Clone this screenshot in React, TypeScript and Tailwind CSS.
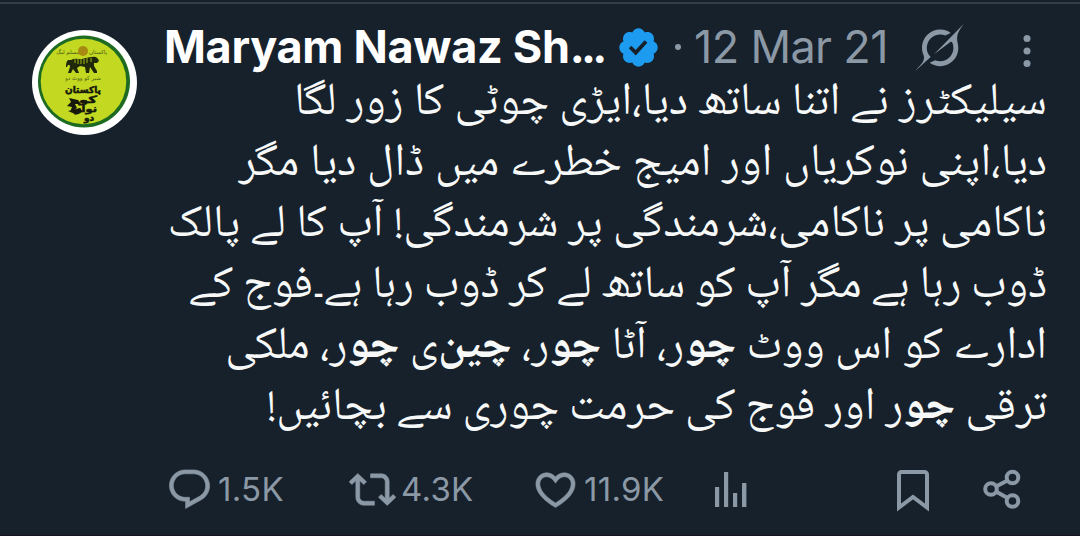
import type { ReactNode } from 'react';

const ICON = 'fill-[#8b98a5] shrink-0';

function Avatar() {
  return (
    <svg className="h-[105px] w-[105px] shrink-0" viewBox="0 0 105 105">
      <circle cx="52.5" cy="52.5" r="52.5" fill="#fff" />
      <circle cx="52" cy="51.5" r="46" fill="#1d6b22" />
      <circle cx="51.5" cy="51.5" r="42.8" fill="#c3d820" />
      <g fill="#4a5a14" fontFamily="DejaVu Sans, sans-serif" textAnchor="middle">
        <text x="66" y="24" fontSize="5.5">پاکستان</text>
        <text x="36" y="24" fontSize="5.5">مسلم لیگ</text>
        <text x="51" y="49.5" fontSize="5.5">شیر کو ووٹ دو</text>
      </g>
      <circle cx="51" cy="21" r="5" fill="#a88a12" />
      {/* tiger */}
      <path
        d="M39 30c3-2 7-1 11-1 4-1 6-2 10-2 4-1 6 1 7 4l-2 2-3 0 0 3 3 5v2h-3l-4-6-1 6h-3l-1-6-5-1-3 2 2 5h-3l-3-4-2 4h-3l2-6c0-3-2-3-3 0l-1 0c0-3 0-5 2-7z"
        fill="#20280a"
      />
      <path d="M43 29v4M46 29v5M49 29v5M52 29v5M55 28v5M59 28v4" stroke="#c3d820" strokeWidth=".8" />
      <g fill="#15180a" stroke="#15180a" strokeWidth=".5" fontFamily="DejaVu Sans, sans-serif" fontWeight="700" textAnchor="middle">
        <text x="51" y="63" fontSize="9">پاکستان</text>
        <text x="56" y="73" fontSize="10" textLength="18" lengthAdjust="spacingAndGlyphs">کو</text>
        <text x="54" y="82" fontSize="9" textLength="22" lengthAdjust="spacingAndGlyphs">نواز</text>
        <text x="57" y="91" fontSize="9">دو</text>
      </g>
      <path d="M37 68l9 2 3 4-6 0 2 4-7 4 2-5-5-1 4-4zM36 81l12-3 3 4-8 2z" fill="#15180a" />
    </svg>
  );
}

function Verified() {
  return (
    <svg className="h-[45px] w-[45px] shrink-0 fill-[#1d9bf0]" viewBox="0 0 24 24">
      <path d="M22.25 12c0-1.430-.88-2.670-2.190-3.340.46-1.390.2-2.900-.81-3.910s-2.520-1.270-3.910-.81c-.66-1.310-1.910-2.190-3.340-2.190s-2.670.88-3.330 2.190c-1.400-.46-2.910-.2-3.920.81s-1.260 2.520-.8 3.910c-1.310.67-2.200 1.910-2.200 3.340s.89 2.670 2.200 3.340c-.46 1.390-.21 2.900.8 3.910s2.520 1.260 3.910.81c.67 1.310 1.910 2.190 3.340 2.190s2.680-.88 3.340-2.190c1.390.45 2.900.2 3.910-.81s1.270-2.520.81-3.910c1.310-.67 2.190-1.910 2.190-3.340zm-11.710 4.200L6.800 12.460l1.410-1.420 2.260 2.260 4.800-5.230 1.470 1.360-6.200 6.770z" />
    </svg>
  );
}

function Line({ children, className = '' }: { children: ReactNode; className?: string }) {
  return (
    <div className={`flex h-[61px] items-center whitespace-pre ${className}`}>
      <span>{children}</span>
    </div>
  );
}

export default function App() {
  return (
    <main className="flex h-[536px] w-[1080px] flex-col overflow-hidden border-b border-[#12131f] bg-[#17212b] font-[Inter,sans-serif]">
      <div className="mt-[2px] h-[2px] w-full shrink-0 bg-[#323d46]" />

      <article className="flex pl-[32px]">
        <div className="pt-[26px]">
          <Avatar />
        </div>

        <div className="ml-[27px] w-[916px]">
          {/* HEADER */}
          <header className="flex h-[68px] items-center pt-[18px]">
            <span className="w-[452px] whitespace-nowrap text-[45px] leading-[54px] font-bold tracking-[-0.3px] text-white">
              Maryam Nawaz Sh<span className="tracking-[-3.8px]">...</span>
            </span>
            <Verified />
            <span className="ml-[14px] h-[6px] w-[6px] shrink-0 rounded-full bg-[#8b98a5]" />
            <span className="ml-[13px] w-[221px] whitespace-nowrap text-[45px] leading-[54px] tracking-[-0.65px] text-[#8b98a5]">12 Mar 21</span>
            <svg className={`h-[47px] w-[49px] ${ICON}`} viewBox="0 0 33 32">
              <path d="M12.745 20.540l10.970-8.190c.539-.4 1.307-.244 1.564.38 1.349 3.288.746 7.241-1.938 9.955-2.683 2.714-6.417 3.310-9.830 1.954l-3.728 1.745c5.347 3.697 11.840 2.782 15.898-1.324 3.219-3.255 4.216-7.692 3.284-11.693l.008.009c-1.351-5.878.332-8.227 3.782-13.031L33 0l-4.540 4.590v-.014L12.743 20.544m-2.263 1.987c-3.837-3.707-3.175-9.446.1-12.755 2.420-2.449 6.388-3.448 9.852-1.979l3.720-1.737c-.67-.49-1.530-1.017-2.515-1.387-4.455-1.854-9.789-.931-13.410 2.728-3.483 3.523-4.579 8.940-2.697 13.561 1.405 3.454-.899 5.898-3.220 8.364C1.490 30.200.666 31.074 0 32l10.478-9.466" />
            </svg>
            <svg className={`ml-[59px] h-[40px] w-[8px] ${ICON}`} viewBox="0 0 8 40">
              <circle cx="4" cy="11.5" r="3.5" />
              <circle cx="4" cy="24" r="3.5" />
              <circle cx="4" cy="36.5" r="3.5" />
            </svg>
          </header>

          {/* TWEET TEXT */}
          <div dir="rtl" lang="ur" className="pr-[33px] font-['Noto_Naskh_Arabic_UI','Noto_Naskh_Arabic','Noto_Sans_Arabic','Noto_Sans','DejaVu_Sans',sans-serif] text-[45.8px] text-[#f7f9f9]">
            <Line className="[word-spacing:0.1px]">سیلیکٹرز نے اتنا ساتھ دیا،ایڑی چوٹی کا زور لگا</Line>
            <Line className="[word-spacing:0.7px]">دیا،اپنی نوکریاں اور امیج خطرے میں ڈال دیا مگر</Line>
            <Line className="[word-spacing:0.2px]">ناکامی پر ناکامی،شرمندگی پر شرمندگی! آپ کا لے پالک</Line>
            <Line className="[word-spacing:-0.33px]">ڈوب رہا ہے مگر آپ کو ساتھ لے کر ڈوب رہا ہے۔فوج کے</Line>
            <Line className="[word-spacing:0.1px]">
              ادارے کو اس ووٹ <b>چو</b>ر، آٹا <b>چو</b>ر، <b>چین</b>&zwnj;ی <b>چو</b>ر، ملکی
            </Line>
            <Line className="[word-spacing:-0.1px]">
              ترقی <b>چو</b>ر اور فوج کی حرمت چوری سے بچائیں!
            </Line>
          </div>

          {/* ACTIONS */}
          <footer className="mt-[27px] flex h-[48px] items-center text-[33px] leading-[40px] tracking-[0.3px] text-[#8b98a5]">
            <div className="flex w-[183px] items-center pl-[2px]">
              <svg className={`h-[47px] w-[47px] stroke-[#8b98a5] stroke-[0.3] ${ICON}`} viewBox="0 0 24 24">
                <path d="M1.751 10c0-4.420 3.584-8 8.005-8h4.366c4.490 0 8.129 3.640 8.129 8.130 0 2.960-1.607 5.680-4.196 7.110l-8.054 4.460v-3.690h-.067c-4.490.1-8.183-3.510-8.183-8.010zm8.005-6c-3.317 0-6.005 2.690-6.005 6 0 3.370 2.770 6.080 6.138 6.010l.351-.01h1.761v2.300l5.087-2.810c1.951-1.080 3.163-3.130 3.163-5.360 0-3.390-2.744-6.130-6.129-6.130H9.756z" />
              </svg>
              <span className="ml-[5px]">1.5K</span>
            </div>
            <div className="flex w-[185px] items-center pl-[2px]">
              <svg className={`h-[47px] w-[47px] stroke-[#8b98a5] stroke-[0.3] ${ICON}`} viewBox="0 0 24 24">
                <path d="M4.500 3.880l4.432 4.140-1.364 1.460L5.500 7.550V16c0 1.100.896 2 2 2H13v2H7.500c-2.209 0-4-1.790-4-4V7.550L1.432 9.480.068 8.020 4.500 3.880zM16.500 6H11V4h5.500c2.209 0 4 1.790 4 4v8.450l2.068-1.930 1.364 1.460-4.432 4.140-4.432-4.140 1.364-1.460 2.068 1.930V8c0-1.100-.896-2-2-2z" />
              </svg>
              <span className="ml-[5px]">4.3K</span>
            </div>
            <div className="flex w-[183px] items-center">
              <svg className={`h-[47px] w-[47px] stroke-[#8b98a5] stroke-[0.3] ${ICON}`} viewBox="0 0 24 24">
                <path d="M16.697 5.500c-1.222-.06-2.679.51-3.890 2.160l-.805 1.090-.806-1.090C9.984 6.010 8.526 5.440 7.304 5.500c-1.243.07-2.349.78-2.910 1.910-.552 1.120-.633 2.780.479 4.820 1.074 1.970 3.257 4.270 7.129 6.610 3.870-2.340 6.052-4.640 7.126-6.610 1.111-2.040 1.030-3.700.477-4.820-.561-1.130-1.666-1.840-2.908-1.910zm4.187 7.690c-1.351 2.480-4.001 5.120-8.379 7.670l-.503.3-.504-.3c-4.379-2.550-7.029-5.190-8.382-7.670-1.360-2.500-1.410-4.860-.514-6.670.887-1.790 2.647-2.910 4.601-3.010 1.651-.09 3.368.56 4.798 2.010 1.429-1.450 3.146-2.100 4.796-2.010 1.954.1 3.714 1.220 4.601 3.010.896 1.810.846 4.170-.514 6.670z" />
              </svg>
              <span className="ml-[5px]">11.9K</span>
            </div>
            <svg className={`h-[48px] w-[32px] ${ICON}`} viewBox="0 0 32 48">
              <path d="M0 22h4.200v20H0zM9 7h4.200v35H9zM18 28h4.200v14H18zM27 18h4.400v24H27z" />
            </svg>
            <svg className="ml-[149px] h-[48px] w-[34px] shrink-0 fill-none stroke-[#8b98a5] stroke-4" viewBox="0 0 34 48">
              <path d="M3 42.500V9.500a2.500 2.500 0 0 1 2.500-2.500h23a2.500 2.500 0 0 1 2.500 2.500v33L17 32z" />
            </svg>
            <svg className="ml-[53px] h-[48px] w-[40px] shrink-0 fill-none stroke-[#8b98a5] stroke-4" viewBox="0 0 40 48">
              <circle cx="8" cy="24" r="5.8" />
              <circle cx="29.5" cy="12.5" r="5.8" />
              <circle cx="29.5" cy="36" r="5.8" />
              <path d="M13 21.500l11.500-6M13 26.500l11.500 6.500" />
            </svg>
          </footer>
        </div>
      </article>
    </main>
  );
}
